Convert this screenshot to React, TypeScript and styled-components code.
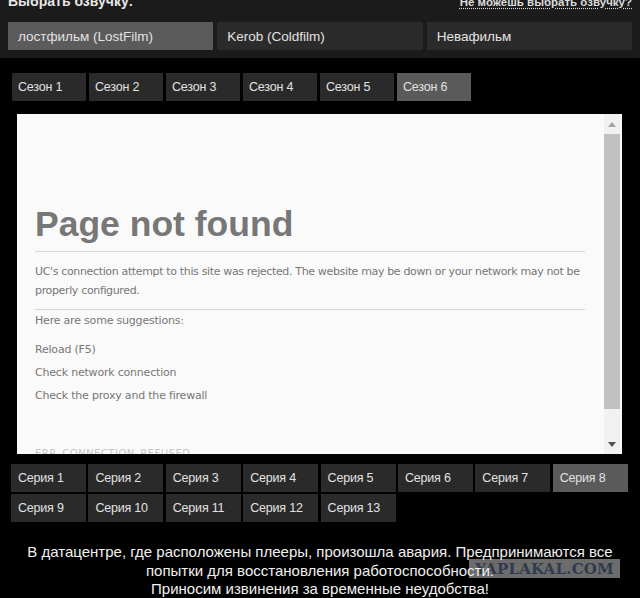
import React from "react";
import styled, { createGlobalStyle } from "styled-components";

const GlobalStyle = createGlobalStyle`
  html, body {
    margin: 0;
    padding: 0;
    background: #000;
  }
  body {
    font-family: "Liberation Sans", Arial, sans-serif;
    overflow: hidden;
  }
`;

const Page = styled.div`
  width: 640px;
  height: 598px;
  background: #000;
  position: relative;
  overflow: hidden;
`;

const Header = styled.div`
  background: #1b1b1b;
  padding: 0 8px 8px 8px;
`;

const TitleRow = styled.div`
  display: flex;
  justify-content: space-between;
  align-items: baseline;
  margin-top: -8px;
  height: 20px;
  margin-bottom: 10px;
`;

const Title = styled.div`
  color: #e8e8e8;
  font-weight: bold;
  font-size: 14px;
  line-height: 20px;
  margin-top: -1px;
`;

const HelpLink = styled.a`
  color: #dcdcdc;
  font-weight: bold;
  font-size: 11.5px;
  line-height: 20px;
  text-decoration: underline dotted;
  text-underline-offset: 2px;
  cursor: pointer;
`;

const VoiceRow = styled.div`
  display: flex;
  gap: 4px;
`;

const VoiceButton = styled.div<{ $active?: boolean }>`
  flex: 1;
  height: 28px;
  display: flex;
  align-items: center;
  padding-left: 10px;
  background: ${(p) => (p.$active ? "#5b5b5b" : "#2b2b2b")};
  color: #e2e2e2;
  font-size: 13.5px;
`;

const TabRow = styled.div`
  display: flex;
  gap: 3px;
  padding-left: 12px;
  margin-top: 15px;
`;

const Tab = styled.div<{ $active?: boolean }>`
  width: 74px;
  height: 28px;
  display: flex;
  align-items: center;
  padding-left: 6px;
  box-sizing: border-box;
  background: ${(p) => (p.$active ? "#5a5a5a" : "#2a2a2a")};
  color: #e2e2e2;
  font-size: 12.5px;
  letter-spacing: -0.2px;
`;

const Frame = styled.div`
  margin: 13px 0 0 17px;
  width: 605px;
  height: 340px;
  background: #fafafa;
  display: flex;
  overflow: hidden;
`;

const FrameBody = styled.div`
  flex: 1;
  padding: 88px 19px 0 18px;
  font-family: "DejaVu Sans", Tahoma, sans-serif;
  color: #777;
  overflow: hidden;
`;

const Heading = styled.h1`
  margin: 0;
  font-family: "Liberation Sans", Arial, sans-serif;
  font-size: 35.5px;
  font-weight: bold;
  color: #777;
  line-height: 44px;
  padding-bottom: 5px;
  border-bottom: 1px solid #d6d6d6;
`;

const Para = styled.p`
  margin: 0;
  font-size: 11px;
  letter-spacing: -0.35px;
  line-height: 19px;
  padding: 10px 0 9px;
  border-bottom: 1px solid #d6d6d6;
`;

const Suggest = styled.div`
  font-size: 11px;
  letter-spacing: -0.2px;
  line-height: 19px;
  padding-top: 1px;
`;

const SuggestList = styled.div`
  margin-top: 10px;
  display: flex;
  flex-direction: column;
  gap: 4px;
  font-size: 11px;
  letter-spacing: -0.2px;
  line-height: 19px;
`;

const ErrCode = styled.div`
  margin-top: 43px;
  font-size: 10px;
  color: #c4c4c4;
  letter-spacing: 0.5px;
`;

const Scrollbar = styled.div`
  width: 16px;
  margin-right: 2px;
  background: #f1f1f1;
  display: flex;
  flex-direction: column;
  align-items: center;
`;

const Arrow = styled.div`
  height: 20px;
  display: flex;
  align-items: center;
  justify-content: center;
`;

const Thumb = styled.div`
  width: 16px;
  height: 275px;
  background: #c1c1c1;
`;

const Spacer = styled.div`
  flex: 1;
`;

const EpisodeGrid = styled.div`
  display: grid;
  grid-template-columns: repeat(8, 75px);
  column-gap: 2.4px;
  row-gap: 2px;
  padding-left: 11px;
  margin-top: 10px;
`;

const Episode = styled(Tab)`
  width: 75px;
  padding-left: 7px;
`;

const Message = styled.div`
  position: relative;
  z-index: 1;
  margin-top: 21px;
  text-align: center;
  color: #f0f0f0;
  font-size: 15px;
  line-height: 18.5px;
`;

const Watermark = styled.div`
  position: absolute;
  z-index: 0;
  left: 469px;
  top: 559px;
  width: 151px;
  height: 19px;
  background: rgba(120, 120, 120, 0.9);
  color: #2f3b4c;
  font-family: "DejaVu Serif", serif;
  font-weight: bold;
  font-size: 15px;
  display: flex;
  align-items: center;
  justify-content: center;
  letter-spacing: 0.2px;
`;

const voices = ["лостфильм (LostFilm)", "Kerob (Coldfilm)", "Невафильм"];
const seasons = [1, 2, 3, 4, 5, 6];
const episodes = Array.from({ length: 13 }, (_, i) => i + 1);

export default function App() {
  return (
    <Page>
      <GlobalStyle />
      <Header>
        <TitleRow>
          <Title>Выбрать озвучку:</Title>
          <HelpLink>Не можешь выбрать озвучку?</HelpLink>
        </TitleRow>
        <VoiceRow>
          {voices.map((v, i) => (
            <VoiceButton key={v} $active={i === 0}>
              {v}
            </VoiceButton>
          ))}
        </VoiceRow>
      </Header>

      <TabRow>
        {seasons.map((s) => (
          <Tab key={s} $active={s === 6}>
            Сезон {s}
          </Tab>
        ))}
      </TabRow>

      <Frame>
        <FrameBody>
          <Heading>Page not found</Heading>
          <Para>
            UC's connection attempt to this site was rejected. The website may
            be down or your network may not be properly configured.
          </Para>
          <Suggest>Here are some suggestions:</Suggest>
          <SuggestList>
            <div>Reload (F5)</div>
            <div>Check network connection</div>
            <div>Check the proxy and the firewall</div>
          </SuggestList>
          <ErrCode>ERR_CONNECTION_REFUSED</ErrCode>
        </FrameBody>
        <Scrollbar>
          <Arrow>
            <svg width="8" height="5" viewBox="0 0 8 5">
              <path d="M0 5 L4 0 L8 5 Z" fill="#a3a3a3" />
            </svg>
          </Arrow>
          <Thumb />
          <Spacer />
          <Arrow>
            <svg width="8" height="5" viewBox="0 0 8 5">
              <path d="M0 0 L4 5 L8 0 Z" fill="#505050" />
            </svg>
          </Arrow>
        </Scrollbar>
      </Frame>

      <EpisodeGrid>
        {episodes.map((e) => (
          <Episode key={e} $active={e === 8}>
            Серия {e}
          </Episode>
        ))}
      </EpisodeGrid>

      <Message>
        В датацентре, где расположены плееры, произошла авария. Предпринимаются
        все
        <br />
        попытки для восстановления работоспособности.
        <br />
        Приносим извинения за временные неудобства!
      </Message>
      <Watermark>YAPLAKAL.COM</Watermark>
    </Page>
  );
}
